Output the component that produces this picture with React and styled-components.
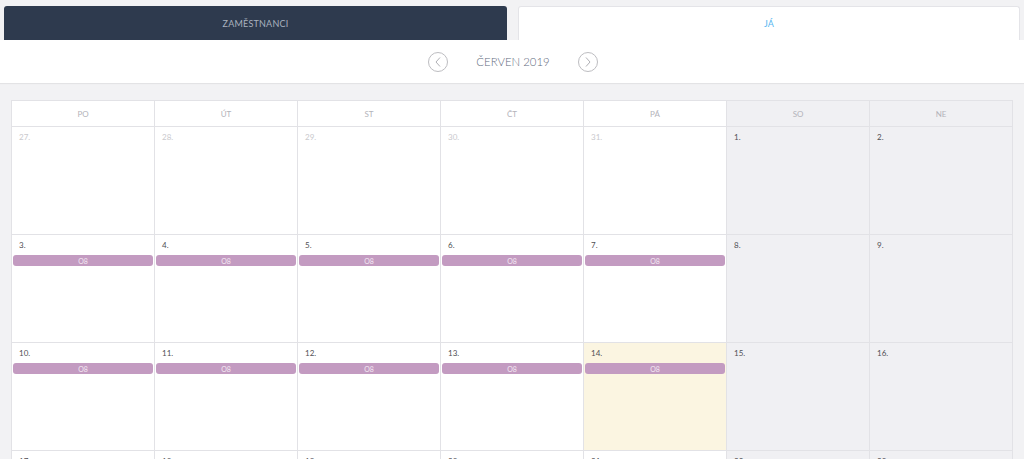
import styled, { createGlobalStyle } from 'styled-components'

const Global = createGlobalStyle`
	body {
		margin: 0;
		background: #f2f2f4;
		font-family: Lato, "Open Sans", sans-serif;
		overflow: hidden;
	}
`

const Page = styled.div`
	width: 1024px;
	height: 459px;
	overflow: hidden;
`

// TABS
const Tabs = styled.div`
	display: grid;
	grid-template-columns: 503px 502px;
	gap: 11px;
	padding: 6px 4px 0 4px;
	height: 34px;
`
const Tab = styled.div`
	display: flex;
	align-items: center;
	justify-content: center;
	border-radius: 3px 3px 0 0;
	font-size: 9px;
	letter-spacing: 0.2px;
	text-transform: uppercase;
	background: ${(p) => (p.active ? '#ffffff' : '#2e3a4e')};
	color: ${(p) => (p.active ? '#55b6f0' : '#a9b1be')};
	border: ${(p) => (p.active ? '1px solid #e4e4e8' : 'none')};
	border-bottom: none;
`

// MONTH BAR
const MonthBar = styled.div`
	height: 43px;
	background: #fff;
	display: flex;
	align-items: center;
	justify-content: center;
	gap: 28px;
	box-shadow: 0 1px 1px rgba(0, 0, 0, 0.06);
	padding-left: 2px;
`
const Arrow = styled.div`
	width: 20px;
	height: 20px;
	border: 1px solid #bdbdc1;
	border-radius: 50%;
	display: flex;
	align-items: center;
	justify-content: center;
	box-sizing: border-box;
`
const MonthTitle = styled.div`
	font-size: 11.4px;
	font-weight: 300;
	color: #5f6c7d;
	white-space: nowrap;
`

// CALENDAR
const Calendar = styled.div`
	margin: 17px 11px 0 11px;
	display: grid;
	grid-template-columns: repeat(7, 1fr);
	grid-auto-rows: 108px;
	grid-template-rows: 26px;
	border-top: 1px solid #e2e2e6;
	border-left: 1px solid #e2e2e6;
`
const DayName = styled.div`
	display: flex;
	align-items: center;
	justify-content: center;
	font-size: 8px;
	color: #b3b3ba;
	background: ${(p) => (p.weekend ? '#f0f0f3' : '#fff')};
	border-right: 1px solid #e2e2e6;
	border-bottom: 1px solid #e2e2e6;
`
const Cell = styled.div`
	background: ${(p) => (p.today ? '#fbf5e1' : p.weekend ? '#f0f0f3' : '#fff')};
	border-right: 1px solid #e2e2e6;
	border-bottom: 1px solid #e2e2e6;
	padding: 5px 1px 0 1px;
	display: flex;
	flex-direction: column;
	gap: 5px;
`
const DayNumber = styled.div`
	font-size: 8px;
	padding-left: 6px;
	color: ${(p) => (p.muted ? '#c9c9cd' : '#4f4f54')};
	height: 10px;
	line-height: 10px;
`
const Shift = styled.div`
	height: 11px;
	border-radius: 3px;
	background: #c39bc1;
	color: #f3e9f3;
	font-size: 7px;
	display: flex;
	align-items: center;
	justify-content: center;
`

const days = ['Po', 'Út', 'St', 'Čt', 'Pá', 'So', 'Ne']

const weeks = [
	[27, 28, 29, 30, 31, 1, 2],
	[3, 4, 5, 6, 7, 8, 9],
	[10, 11, 12, 13, 14, 15, 16],
	[17, 18, 19, 20, 21, 22, 23],
]

const ChevronLeft = () => (
	<svg width="8" height="12" viewBox="0 0 8 12">
		<path d="M6 1.5 L2 6 L6 10.5" fill="none" stroke="#b0b0b5" strokeWidth="1" />
	</svg>
)
const ChevronRight = () => (
	<svg width="8" height="12" viewBox="0 0 8 12">
		<path d="M2 1.5 L6 6 L2 10.5" fill="none" stroke="#b0b0b5" strokeWidth="1" />
	</svg>
)

const App = () => {
	return (
		<Page>
			<Global />
			<Tabs>
				<Tab>Zaměstnanci</Tab>
				<Tab active>Já</Tab>
			</Tabs>
			<MonthBar>
				<Arrow>
					<ChevronLeft />
				</Arrow>
				<MonthTitle>ČERVEN 2019</MonthTitle>
				<Arrow>
					<ChevronRight />
				</Arrow>
			</MonthBar>
			<Calendar>
				{days.map((d, i) => (
					<DayName key={d} weekend={i > 4}>
						{d.toUpperCase()}
					</DayName>
				))}
				{weeks.map((week, w) =>
					week.map((n, i) => {
						const muted = w === 0 && n > 20
						const weekend = i > 4
						const shift = !muted && !weekend && w > 0 && w < 3
						return (
							<Cell key={`${w}-${i}`} weekend={weekend} today={w === 2 && n === 14}>
								<DayNumber muted={muted}>{n}.</DayNumber>
								{shift && <Shift>O8</Shift>}
							</Cell>
						)
					})
				)}
			</Calendar>
		</Page>
	)
}

export default App
